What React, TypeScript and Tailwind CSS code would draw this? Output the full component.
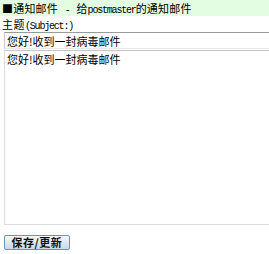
export default function App() {
  const mono = "font-['Liberation_Mono',monospace] text-[10px] tracking-[-1.2px]"
  return (
    <div className="w-[269px] h-[254px] overflow-hidden bg-white text-black text-[11px] leading-[16px] font-['Noto_Sans_CJK_SC','Liberation_Sans',sans-serif]">
      <div className="h-[16px] bg-[#e3fde3] pl-[2px] whitespace-nowrap tracking-[0.2px]">
        ■通知邮件<span className={`${mono} px-[2px]`}> - </span>给<span className={mono}>postmaster</span>的通知邮件
      </div>
      <div className="h-[16px] pl-[2px] whitespace-nowrap tracking-[0.5px]">
        主题<span className={mono}>(Subject:)</span>
      </div>
      <div className="pl-[4px]">
        <input
          readOnly
          value="您好!收到一封病毒邮件"
          className="block w-[300px] h-[17px] px-[2px] text-[11px] leading-[15px] border-t border-l border-t-[#9a9a9a] border-l-[#c8c8c8] border-b border-b-[#e8e8e8] outline-none font-['Noto_Sans_CJK_SC',sans-serif]"
        />
        <textarea
          readOnly
          value="您好!收到一封病毒邮件"
          className="block mt-[1px] w-[300px] h-[175px] px-[2px] py-[1px] text-[11px] leading-[14px] resize-none border border-[#dcdcdc] border-t-[#c4c4c4] outline-none font-['Noto_Sans_CJK_SC',sans-serif]"
        />
        <button className="mt-[10px] w-[66px] h-[15px] flex items-center justify-center border border-[#6f93b5] rounded-[2px] bg-gradient-to-b from-[#f4f8fc] to-[#c9d9e8] text-[11px] font-bold leading-none text-[#111] tracking-[0.5px]">
          保存/更新
        </button>
      </div>
    </div>
  )
}
